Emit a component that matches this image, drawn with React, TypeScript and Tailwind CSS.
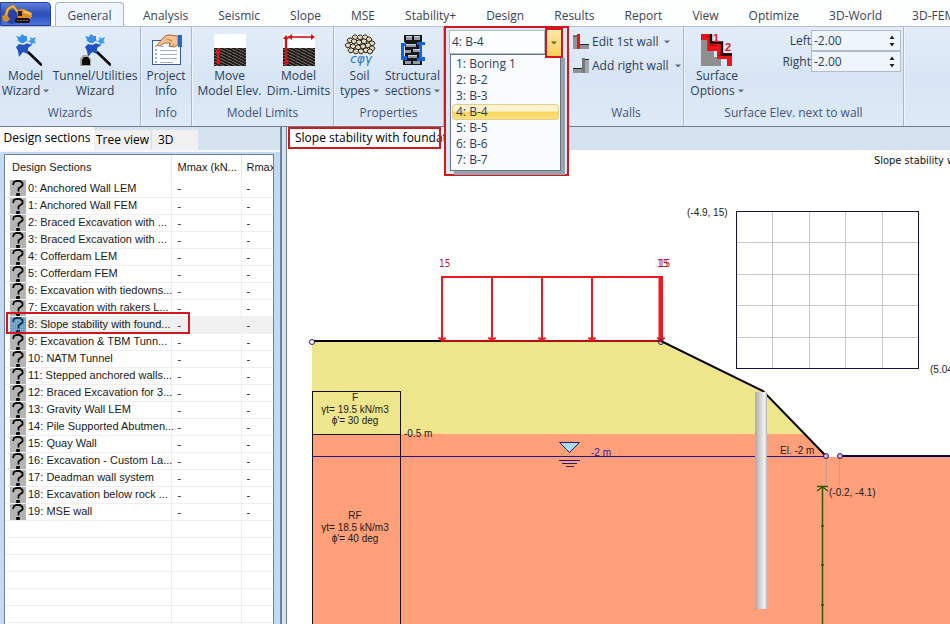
import React, { useState } from "react";

const uiFont = "font-['Open_Sans','Noto_Sans',sans-serif]";
const listFont = "font-['Liberation_Sans',Arial,sans-serif]";

const tabs = [
  "General", "Analysis", "Seismic", "Slope", "MSE", "Stability+", "Design",
  "Results", "Report", "View", "Optimize", "3D-World", "3D-FEM",
];

const sections = [
  "Anchored Wall LEM",
  "Anchored Wall FEM",
  "Braced Excavation with ...",
  "Braced Excavation with ...",
  "Cofferdam LEM",
  "Cofferdam FEM",
  "Excavation with tiedowns...",
  "Excavation with rakers L...",
  "Slope stability with found...",
  "Excavation & TBM Tunn...",
  "NATM Tunnel",
  "Stepped anchored walls...",
  "Braced Excavation for 3...",
  "Gravity Wall LEM",
  "Pile Supported Abutmen...",
  "Quay Wall",
  "Excavation - Custom La...",
  "Deadman wall system",
  "Excavation below rock ...",
  "MSE wall",
];

const borings = ["1: Boring 1", "2: B-2", "3: B-3", "4: B-4", "5: B-5", "6: B-6", "7: B-7"];

function Caret() {
  return (
    <svg className="ml-[3px] inline-block h-1 w-[6px] shrink-0 align-middle" viewBox="0 0 6 4" aria-hidden="true">
      <path d="M0 0.5H6L3 3.5Z" fill="#5c6b80" />
    </svg>
  );
}

function Excavator() {
  return (
    <svg className="h-5 w-[30px]" viewBox="0 0 30 20" aria-hidden="true">
      <circle cx="10" cy="13" r="7" fill="#2443a8" />
      <path d="M3 14L6 5L11 2L17 9" fill="none" stroke="#b06e1c" strokeWidth="3.4" strokeLinejoin="round" />
      <path d="M3 14L6 5L11 2L17 9" fill="none" stroke="#f0ba5e" strokeWidth="1.8" strokeLinejoin="round" />
      <path d="M0 12L5 11L8 15L5 18L1 17Z" fill="#d58d2a" />
      <path d="M15 8L18 5H22L30 9V13L27 15H16Z" fill="#d98d22" />
      <path d="M16 7H20V12H16Z" fill="#2b1c10" />
      <path d="M21 6L29 9V11L22 9Z" fill="#f7c565" />
      <rect x="13" y="14" width="15" height="5" rx="2.5" fill="#17110f" />
      <path d="M15 16.5H26" stroke="#946226" strokeDasharray="2 1" />
    </svg>
  );
}

function Wand({ tunnel = false }: { tunnel?: boolean }) {
  return (
    <svg className="h-8 w-8" viewBox="0 0 32 32" aria-hidden="true">
      <path d="M18.5 18.5L31 30.5" stroke="#08080c" strokeWidth="2.6" strokeLinecap="round" />
      <path d="M13 4L16 9L22 11L18 14L18 20L13 18L9 23L8 17L6 13L9 10Z" fill="#2253bd" />
      <path d="M12 0L14.500 2L17 2L17 5L18 8L14 10L9 9L7 8L8 5L6 2L10 3Z" fill="#3a8eea" />
      <path d="M7.500 7L10 9.500L14 10L17.500 7.500" stroke="#eaf5fe" strokeWidth="1.600" fill="none" />
      <path d="M20 3L22.500 4.500L26 3L24.500 6.500L26 9.500L23 9L21 12L20.500 8.500L18 7.500L20.500 6Z" fill="#3f97ef" />
      {tunnel && (
        <g>
          <path d="M1 32V25L4 21H8L12 25V32Z" fill="#a9a59c" />
          <path d="M3 31V26L5 23H9L11 26V31Z" fill="#08080a" />
        </g>
      )}
    </svg>
  );
}

function ProjectIcon() {
  return (
    <svg className="h-8 w-8" viewBox="0 0 32 32" aria-hidden="true">
      <rect x="2.500" y="6.500" width="28" height="24" fill="#fbfdff" stroke="#3d5a94" />
      <path d="M5 12H7M5 16H7M5 20H7M5 24H7M5 28H7" stroke="#4a66a4" />
      <path d="M10 16.500H27M10 20.500H27M10 24.500H27M10 28.500H23M10 12.500H14" stroke="#a3b0c8" />
      <path d="M7 11L13 4Q15 1 19 1L28 2V11L24 13L19 12L20 9L15 9L9 12Z" fill="#f7c08e" stroke="#8d552b" strokeWidth="0.800" />
      <path d="M17 5L22 7M19 12L21 9M22 13L24 10" stroke="#a5663a" strokeWidth="0.800" />
      <rect x="28" y="1" width="4" height="12" fill="#2866cc" />
    </svg>
  );
}

function LimitsIcon({ dims = false }: { dims?: boolean }) {
  const id = dims ? "hatch-dims" : "hatch-move";
  return (
    <svg className="h-8 w-8 overflow-visible" viewBox="0 0 32 32" aria-hidden="true">
      <defs>
        <pattern id={id} width="6" height="3" patternUnits="userSpaceOnUse">
          <rect width="6" height="3" fill="#1c1816" />
          <path d="M0 0L6 3" stroke="#8a8178" strokeWidth="0.900" />
        </pattern>
      </defs>
      <rect width="32" height="14" fill="#fdfeff" />
      <rect y="14" width="32" height="18" fill={"url(#" + id + ")"} />
      {dims ? (
        <g stroke="#d0141a" fill="#d0141a">
          <path d="M3 3V30" strokeWidth="2.400" />
          <path d="M5 3H30" strokeWidth="1.600" />
          <path d="M0 5L3 1L6 5ZM5 3L9 0V6ZM32 3L28 0V6ZM0 27L3 32L6 27Z" stroke="none" />
        </g>
      ) : (
        <g fill="#e31218">
          <rect x="3" y="17" width="2" height="12" />
          <path d="M1 19L4 14L7 19ZM1 27L4 31L7 27Z" />
        </g>
      )}
    </svg>
  );
}

const stones: number[][] = [
  [11, 3], [16, 3], [21, 3], [25, 5], [6, 6], [10, 7], [15, 8], [20, 7], [28, 9],
  [4, 11], [9, 12], [14, 13], [19, 12], [24, 11], [28, 14], [7, 16], [12, 17], [17, 17], [22, 16], [26, 17],
];

function SoilIcon() {
  return (
    <svg className="h-8 w-8" viewBox="0 0 32 32" aria-hidden="true">
      {stones.map(([x, y]) => (
        <path
          key={x + "-" + y}
          d={`M${x - 3} ${y}L${x - 1} ${y - 2}L${x + 1} ${y - 2}L${x + 3} ${y}L${x + 2} ${y + 2}L${x - 1} ${y + 3}Z`}
          fill="#e2d6b8"
          stroke="#2b2722"
          strokeWidth="1"
        />
      ))}
      <text x="17" y="29" textAnchor="middle" fontSize="12" fontStyle="italic" fill="#1b72c8" className="font-['DejaVu_Sans',sans-serif]">
        cφγ
      </text>
    </svg>
  );
}

function StructuralIcon() {
  return (
    <svg className="h-8 w-8" viewBox="0 0 32 32" aria-hidden="true">
      <path d="M7 1H25V8H7ZM8 8H24V26H8ZM6 25H25V31H6Z" fill="#15171b" />
      <path d="M4 9H9V12H7V22H10V26H4ZM20 8H28V11H25V23H28V27H20V24H22V11H20Z" fill="#1263dd" />
      <path d="M9 2H15V6H9ZM17 2H23V6H17ZM9 10H19V13H9ZM8 16H14V19H8ZM16 15H23V18H16ZM11 21H20V24H11ZM8 27H14V30H8ZM16 27H23V30H16Z" fill="#949ba4" />
      <path d="M9 2.500H15M17 2.500H23M9 10.500H19M16 15.500H23M11 21.500H20" stroke="#ccd2d8" />
    </svg>
  );
}

function SurfaceIcon() {
  return (
    <svg className="h-8 w-8 overflow-visible" viewBox="0 0 32 32" aria-hidden="true">
      <path d="M0 5H6V14H13V23H20V32H0Z" fill="#8f8f8f" />
      <path d="M0 0H10V8H20V19H31V32H26V25H16V17H6V6H0Z" fill="#f01216" />
      <path d="M5 2.500H8M8 11.500H16M17 21.500H26" stroke="#8c0a0c" />
      <path d="M10 0V8.500H21V20.500H31" fill="none" stroke="#120606" strokeWidth="2.400" />
      <g className="font-['Liberation_Sans',Arial,sans-serif]" fill="#e5151c" fontSize="11" fontWeight="700">
        <text x="12" y="8">1</text>
        <text x="24" y="17">2</text>
      </g>
    </svg>
  );
}

function WallIcon({ edit = false }: { edit?: boolean }) {
  return (
    <svg className="h-4 w-4 shrink-0" viewBox="0 0 16 16" aria-hidden="true">
      {edit ? (
        <g>
          <path d="M0 2H5V15H0Z" fill="#8f9297" />
          <path d="M0 2H5" stroke="#222" />
          <rect x="7" y="11" width="9" height="4" fill="#8f9297" />
          <path d="M7 10.500H16" stroke="#222" />
          <rect x="4" y="0" width="3" height="15" fill="#e8141a" />
        </g>
      ) : (
        <g>
          <rect x="0" y="11" width="9" height="4" fill="#8f9297" />
          <path d="M0 10.500H9" stroke="#222" />
          <path d="M11 2H16V15H11Z" fill="#a5a8ac" />
          <path d="M11 1.500H16" stroke="#222" />
          <rect x="9" y="0" width="3" height="15" fill="#74777c" />
        </g>
      )}
    </svg>
  );
}

function QuestionIcon({ selected = false }: { selected?: boolean }) {
  return (
    <svg className="h-4 w-4 shrink-0" viewBox="0 0 16 16" aria-hidden="true">
      <rect width="16" height="16" fill={selected ? "#6d9cc4" : "#b4b4b4"} />
      {selected && <path d="M0 1H16M0 4H16M0 7H16M0 10H16M0 13H16" stroke="#a4c4de" strokeDasharray="1 1" />}
      <path d="M3 5L4 2L6.500 1H10L12.500 3V5.500L8.500 8.500V11.500" fill="none" stroke={selected ? "#12324f" : "#0c0c0c"} strokeWidth="1.800" />
      <rect x="6" y="13" width="4" height="3" rx="1" fill={selected ? "#12324f" : "#0c0c0c"} />
    </svg>
  );
}

function Group({ label, width, children }: { label: string; width: string; children: React.ReactNode }) {
  return (
    <section
      aria-label={label}
      className={`flex shrink-0 flex-col border-r border-[#aab8cb] shadow-[1px_0_0_#eef5fc] ${width}`}
    >
      <div className="flex flex-1 justify-center">{children}</div>
      <div className="pb-[5px] text-center leading-4 text-[#43557a]">{label}</div>
    </section>
  );
}

function BigButton({ icon, top, bottom, menu = false, width }: {
  icon: React.ReactNode; top: string; bottom: string; menu?: boolean; width: string;
}) {
  return (
    <button className={`flex shrink-0 flex-col items-center whitespace-nowrap leading-[15px] text-[#2b3d5e] ${width}`}>
      {icon}
      <span className="pt-[2px]">{top}</span>
      <span className="flex items-center">{bottom}{menu && <Caret />}</span>
    </button>
  );
}

function Elevation({ label, id }: { label: string; id: string }) {
  const [value, setValue] = useState("-2.00");
  const step = (d: number) => setValue((parseFloat(value) + d).toFixed(2));
  return (
    <div className="flex h-[21px] items-center justify-end">
      <label htmlFor={id} className="text-[#2b3d5e]">{label}</label>
      <div className="flex h-full w-[90px] items-center border border-[#b1bccb] bg-[#eef5fd]">
        <input
          id={id}
          value={value}
          onChange={(e) => setValue(e.target.value)}
          className="min-w-0 flex-1 bg-transparent pl-[2px] text-[#2b3d5e] outline-none"
        />
        <div className="flex w-[17px] flex-col items-center gap-1">
          <button aria-label={label + " up"} onClick={() => step(1)}>
            <svg className="h-1 w-[6px]" viewBox="0 0 6 4"><path d="M0.500 4L3 0.500L5.500 4Z" fill="#222" /></svg>
          </button>
          <button aria-label={label + " down"} onClick={() => step(-1)}>
            <svg className="h-1 w-[6px]" viewBox="0 0 6 4"><path d="M0.500 0L3 3.500L5.500 0Z" fill="#222" /></svg>
          </button>
        </div>
      </div>
    </div>
  );
}

function BoringPicker() {
  const [boring, setBoring] = useState(borings[3]);
  return (
    <div className="relative w-[125px] shrink-0">
      <div className="absolute top-[-1px] left-0 z-10 h-[150px] w-[125px] border-2 border-[#d0181e] bg-[#dbe7f5] pt-[2px] pr-[4px] pl-[3px]">
        <div className="flex h-6">
          <select
            aria-label="Boring"
            value={boring}
            onChange={(e) => setBoring(e.target.value)}
            className="min-w-0 flex-1 appearance-none border border-[#b1bccb] bg-[#fcfdff] pl-[2px] text-[#2b3d5e]"
          >
            {borings.map((b) => <option key={b}>{b}</option>)}
          </select>
          <button aria-label="Open boring list" className="relative -mt-[2px] flex h-[30px] w-[18px] shrink-0 items-center justify-center border-2 border-[#d0181e] bg-linear-to-b from-[#fce9a8] to-[#f8cf5a]">
            <svg className="h-1 w-[6px]" viewBox="0 0 6 4"><path d="M0 0.500H6L3 3.500Z" fill="#7a6420" /></svg>
          </button>
        </div>
        <ul
          role="listbox"
          className="mr-[2px] ml-px border border-[#68727f] bg-[#fafbfd] px-px pt-px pb-[2px] shadow-[4px_4px_0_#99a2ad]"
        >
          {borings.map((b) => (
            <li
              key={b}
              role="option"
              aria-selected={b === boring}
              onClick={() => setBoring(b)}
              className={
                b === boring
                  ? "h-4 rounded-sm bg-linear-to-b from-[#fdf3cf] from-45% via-[#f8d455] via-50% to-[#fbe488] pl-1 leading-4 text-[#2b3d5e] ring-1 ring-[#e3cf8b] ring-inset"
                  : "h-4 pl-1 leading-4 text-[#2b3d5e]"
              }
            >
              {b}
            </li>
          ))}
        </ul>
      </div>
    </div>
  );
}

function Ribbon() {
  return (
    <div className="flex h-[100px] shrink-0 border-b border-[#6d7d92] bg-linear-to-b from-[#e3edf9] via-[#d7e5f4] to-[#dde9f6]">
      <Group label="Wizards" width="w-[141px] pt-[7px]">
        <BigButton width="w-[50px]" icon={<Wand />} top="Model" bottom="Wizard" menu />
        <BigButton width="w-[89px]" icon={<Wand tunnel />} top="Tunnel/Utilities" bottom="Wizard" />
      </Group>
      <Group label="Info" width="w-[51px] pt-[7px]">
        <BigButton width="w-[50px]" icon={<ProjectIcon />} top="Project" bottom="Info" />
      </Group>
      <Group label="Model Limits" width="w-[142px] pt-[7px]">
        <BigButton width="w-[72px]" icon={<LimitsIcon />} top="Move" bottom="Model Elev." />
        <BigButton width="w-[66px]" icon={<LimitsIcon dims />} top="Model" bottom="Dim.-Limits" />
      </Group>
      <Group label="Properties" width="w-[110px] pt-[7px]">
        <BigButton width="w-[48px]" icon={<SoilIcon />} top="Soil" bottom="types" menu />
        <BigButton width="w-[58px]" icon={<StructuralIcon />} top="Structural" bottom="sections" menu />
      </Group>
      <BoringPicker />
      <Group label="Walls" width="w-[115px] pt-[3px]">
        <div className="flex w-full flex-col pl-1 text-[#2b3d5e]">
          <button className="flex h-6 items-center gap-[3px] whitespace-nowrap"><WallIcon edit /><span>Edit 1st wall</span><Caret /></button>
          <button className="flex h-6 items-center gap-[3px] whitespace-nowrap"><WallIcon /><span>Add right wall</span><Caret /></button>
        </div>
      </Group>
      <Group label="Surface Elev. next to wall" width="w-[220px]">
        <div className="flex w-full justify-between pr-[2px] pl-[2px]">
          <div className="flex pt-[7px]">
            <BigButton width="w-[62px]" icon={<SurfaceIcon />} top="Surface" bottom="Options" menu />
          </div>
          <div className="flex flex-col pt-[3px]">
            <Elevation label="Left" id="left-elevation" />
            <Elevation label="Right" id="right-elevation" />
          </div>
        </div>
      </Group>
    </div>
  );
}

function SectionsTable() {
  const blank = Array.from({ length: 10 }, (_, i) => i);
  return (
    <div className={`min-h-0 flex-1 overflow-hidden border border-b-0 border-[#6f8296] bg-white text-[11px] text-[#1a1a1a] ${listFont}`}>
      <table className="w-full table-fixed border-collapse">
        <colgroup>
          <col className="w-[166px]" />
          <col className="w-[70px]" />
          <col />
        </colgroup>
        <thead>
          <tr className="h-[25px] text-left whitespace-nowrap">
            <th className="border-r border-[#e6e6e6] pl-[7px] font-normal">Design Sections</th>
            <th className="border-r border-[#e6e6e6] pl-[6px] font-normal">Mmax (kN...</th>
            <th className="overflow-hidden pl-[5px] font-normal">Rmax</th>
          </tr>
        </thead>
        <tbody>
          {sections.map((name, i) => (
            <tr key={i} className={i === 8 ? "relative h-[17px] bg-[#f0f0f0]" : "h-[17px]"}>
              <td className="border-r border-b border-[#efefef] p-0">
                <div className="flex h-4 items-center gap-[2px] pl-[5px] whitespace-nowrap">
                  <QuestionIcon selected={i === 8} />
                  <span>{i}: {name}</span>
                </div>
                {i === 8 && <div className="absolute top-[-4px] left-[1px] h-[22px] w-[184px] border-2 border-[#d0181e]" />}
              </td>
              <td className="border-r border-b border-[#efefef] py-0 pl-[6px] leading-4">-</td>
              <td className="border-b border-[#efefef] py-0 pl-[5px] leading-4">-</td>
            </tr>
          ))}
          {blank.map((i) => (
            <tr key={"blank" + i} className="h-[17px]">
              <td className="border-r border-b border-[#efefef]" />
              <td className="border-r border-b border-[#efefef]" />
              <td className="border-b border-[#efefef]" />
            </tr>
          ))}
        </tbody>
      </table>
    </div>
  );
}

function SidePanel() {
  return (
    <aside className="flex w-[282px] shrink-0 flex-col border-r-2 border-[#6f8296]">
      <div className="flex h-[23px] items-end text-black" role="tablist">
        <button role="tab" aria-selected="true" className="h-full w-[94px] bg-white pb-[1px] whitespace-nowrap">Design sections</button>
        <button role="tab" aria-selected="false" className="h-5 w-[58px] border-r border-[#dcdcdc] bg-[#f0f0f0] whitespace-nowrap">Tree view</button>
        <button role="tab" aria-selected="false" className="h-5 w-[46px] bg-[#f0f0f0] pl-[6px] text-left">3D</button>
      </div>
      <div className="flex min-h-0 flex-1 flex-col border-t-2 border-[#f4f8fc] bg-[#c3daf3] pt-[2px] pr-[6px] pl-1">
        <SectionsTable />
      </div>
    </aside>
  );
}

const gridX = [772, 809, 845, 882];
const gridY = [242, 274, 305, 337];
const loadX = [492, 542, 592];
const depthMarks = [526, 565, 605];

function Drawing() {
  return (
    <svg className={`block h-full w-full ${listFont}`} role="img" aria-label="Slope stability model">
      <defs>
        <linearGradient id="pile" x1="0" x2="1" y1="0" y2="0">
          <stop offset="0" stopColor="#a9a9a9" />
          <stop offset="0.500" stopColor="#d9d8d6" />
          <stop offset="0.800" stopColor="#f3f2ef" />
          <stop offset="1" stopColor="#b5b5b5" />
        </linearGradient>
      </defs>
      <g transform="translate(-287 -150)">
        <path d="M312 341H661L763 391L805 434H312Z" fill="#eee68c" />
        <path d="M312 434H804L827 457H3000V2000H312Z" fill="#ffa07a" />

        <g shapeRendering="crispEdges" fill="none">
          <path d="M312.500 2000V391.500H400.500V2000M312 434.500H400" stroke="#1a1010" />
          <path d="M312 456.500H826" stroke="#24148c" />
          {gridX.map((x) => <path key={x} d={`M${x}.5 211V368`} stroke="#c8c8c8" />)}
          {gridY.map((y) => <path key={y} d={`M736 ${y}.5H918`} stroke="#c8c8c8" />)}
          <rect x="736.500" y="211.500" width="182" height="157" stroke="#14143c" />
        </g>

        <path d="M312 341H661L763 391L826 456" fill="none" stroke="#000" strokeWidth="2" />
        <path d="M840 456H3000" stroke="#080850" strokeWidth="2" />
        <path d="M826.500 458V486M839.500 458V486" stroke="#cf9a8c" />

        <rect x="755" y="392" width="12" height="217" fill="url(#pile)" />

        <g stroke="#ee1820" fill="none">
          <path d="M442 341V277H662V341" strokeWidth="2" />
          <path d="M660.500 277V341" strokeWidth="4" />
          <path d="M441 341H661" stroke="#b01010" strokeWidth="2" />
          {loadX.map((x) => <path key={x} d={`M${x} 277V341`} strokeWidth="2" />)}
          {[442, ...loadX, 661].map((x) => <path key={x} d={`M${x - 4} 338L${x} 341L${x + 4} 338Z`} fill="#ee1820" />)}
        </g>

        <g fill="none" stroke="#2a1a6c">
          <circle cx="312" cy="342" r="2.500" fill="#fff" />
          <circle cx="661" cy="342" r="2.500" />
          <circle cx="826" cy="456" r="2.500" fill="#d9b4d0" />
          <circle cx="840" cy="456" r="2.500" fill="#d9b4d0" />
          <path d="M559.500 442.500H579.500L569.500 452.500Z" fill="#aadcf8" />
          <path d="M559 460.500H580M562 463.500H577M566 466.500H574" />
        </g>

        <g stroke="#2f5a0c" fill="#2f5a0c">
          <path d="M822.500 487V2000" strokeWidth="1.500" />
          <path d="M817 486.500H828M817 491L822.500 487L828 491" fill="none" strokeWidth="1.300" />
          {depthMarks.map((y) => <circle key={y} cx="822.500" cy={y} r="1" />)}
        </g>

        <g fontSize="10" fill="#241a18">
          <text x="687" y="216">(-4.9, 15)</text>
          <text x="930" y="373">(5.04, 5)</text>
          <text x="829" y="496">(-0.2, -4.1)</text>
          <text x="780" y="454">El. -2 m</text>
          <text x="404" y="437">-0.5 m</text>
          <text x="591" y="456" fill="#3c14a0">-2 m</text>
          <g textAnchor="middle">
            <text x="355" y="401">F</text>
            <text x="355" y="413">γt= 19.5 kN/m3</text>
            <text x="355" y="424">ϕ′= 30 deg</text>
            <text x="355" y="519">RF</text>
            <text x="355" y="531">γt= 18.5 kN/m3</text>
            <text x="355" y="542">ϕ′= 40 deg</text>
          </g>
        </g>
        <g className="font-['DejaVu_Sans_Condensed','DejaVu_Sans',sans-serif]" fontSize="10" fill="#c0202c">
          <text x="439" y="267">15</text>
          <text x="657" y="267">15</text>
          <text x="659" y="267">15</text>
        </g>
        <text className="font-['DejaVu_Sans_Condensed','DejaVu_Sans',sans-serif]" x="874" y="164" fontSize="11" fill="#111">
          Slope stability with foundation
        </text>
      </g>
    </svg>
  );
}

export default function App() {
  return (
    <div className={`flex h-screen flex-col overflow-hidden bg-[#d5e3f0] text-[12px] ${uiFont}`}>
      <header className="flex h-[27px] shrink-0 overflow-hidden border-b border-[#b4bfcc] bg-[#fdfefe] whitespace-nowrap">
        <button aria-label="Application menu" className="mt-[2px] flex w-[51px] shrink-0 items-center rounded-tr-sm border border-[#24409c] bg-linear-to-b from-[#5c7fdc] via-[#2c4fb8] to-[#4a74dc] pl-px">
          <Excavator />
        </button>
        <nav className="flex pl-1" aria-label="Ribbon tabs">
          {tabs.map((t, i) => (
            <button
              key={t}
              className={
                i === 0
                  ? "mt-[2px] mr-1 h-[26px] w-[69px] rounded-t-sm border border-b-0 border-[#a7b6cb] bg-[#eef5fc] pt-[1px] text-[#3c4a66]"
                  : "px-[15px] pt-[6px] text-[#3c4356]"
              }
            >
              {t}
            </button>
          ))}
        </nav>
      </header>
      <Ribbon />
      <main className="flex min-h-0 flex-1">
        <SidePanel />
        <section className="ml-1 flex min-w-0 flex-1 flex-col border-l border-[#6f8296]">
          <div className="flex h-[23px] shrink-0">
            <div className="relative w-[161px] shrink-0 bg-white pl-2 leading-[22px] whitespace-nowrap text-black">
              Slope stability with foundatio
              <div className="absolute top-0 left-px h-[22px] w-[153px] border-2 border-[#d0181e]" />
            </div>
          </div>
          <div className="min-h-0 flex-1 overflow-hidden bg-white">
            <Drawing />
          </div>
        </section>
      </main>
    </div>
  );
}
